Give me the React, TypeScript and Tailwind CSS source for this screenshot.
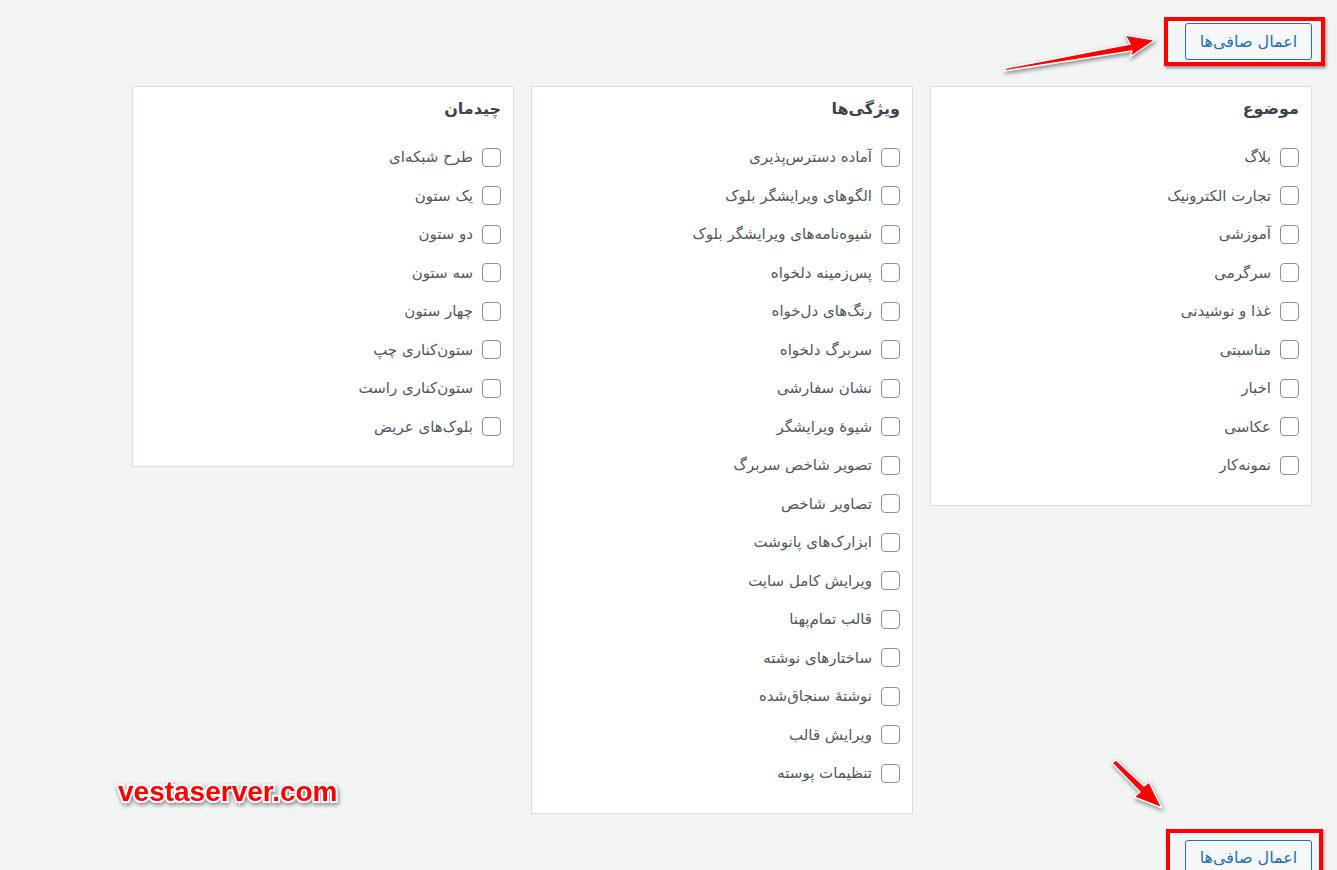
const TOPICS = [
  "بلاگ",
  "تجارت الکترونیک",
  "آموزشی",
  "سرگرمی",
  "غذا و نوشیدنی",
  "مناسبتی",
  "اخبار",
  "عکاسی",
  "نمونه‌کار",
];

const FEATURES = [
  "آماده دسترس‌پذیری",
  "الگوهای ویرایشگر بلوک",
  "شیوه‌نامه‌های ویرایشگر بلوک",
  "پس‌زمینه دلخواه",
  "رنگ‌های دل‌خواه",
  "سربرگ دلخواه",
  "نشان سفارشی",
  "شیوهٔ ویرایشگر",
  "تصویر شاخص سربرگ",
  "تصاویر شاخص",
  "ابزارک‌های پانوشت",
  "ویرایش کامل سایت",
  "قالب تمام‌پهنا",
  "ساختارهای نوشته",
  "نوشتهٔ سنجاق‌شده",
  "ویرایش قالب",
  "تنظیمات پوسته",
];

const LAYOUT = [
  "طرح شبکه‌ای",
  "یک ستون",
  "دو ستون",
  "سه ستون",
  "چهار ستون",
  "ستون‌کناری چپ",
  "ستون‌کناری راست",
  "بلوک‌های عریض",
];

function FilterGroup({ title, items }: { title: string; items: string[] }) {
  return (
    <div className="w-[382px] shrink-0 border border-[#dcdcde] bg-white pr-[12px] pl-4 pt-[10px] pb-[20px]">
      <h4 className="text-[16px] leading-[24px] font-bold text-[#3c434a]">{title}</h4>
      <div className="mt-[17px] flex flex-col">
        {items.map((item) => (
          <label key={item} className="flex h-[38.5px] items-center gap-[9px]">
            <span className="h-[19px] w-[19px] shrink-0 rounded-[4px] border border-[#8c8f94] bg-white" />
            <span className="text-[15px] text-[#50575e]">{item}</span>
          </label>
        ))}
      </div>
    </div>
  );
}

function ApplyButton({ boxClass }: { boxClass: string }) {
  return (
    <div className="relative">
      <button className="h-[37px] w-[127px] rounded-[3px] border border-[#2271b1] bg-[#f6f7f7] text-[16px] text-[#2271b1]">
        اعمال صافی‌ها
      </button>
      {/* annotation frame */}
      <div className={boxClass} />
    </div>
  );
}

export default function App() {
  return (
    <div
      dir="rtl"
      className="relative h-[870px] w-[1337px] overflow-hidden bg-[#f3f4f4] pr-[25px] pt-[23px] font-['DejaVu_Sans',sans-serif]"
    >
      <div className="flex">
        <ApplyButton boxClass="pointer-events-none absolute -top-[6px] -right-[13px] -bottom-[6px] -left-[21px] border-[4px] border-[#ff0000] shadow-[1px_2px_3px_rgba(0,0,0,0.45)]" />
      </div>

      <div className="mt-[26px] flex items-start gap-[17px]">
        <FilterGroup title="موضوع" items={TOPICS} />
        <FilterGroup title="ویژگی‌ها" items={FEATURES} />
        <FilterGroup title="چیدمان" items={LAYOUT} />
      </div>

      <div className="mt-[26px] flex">
        <ApplyButton boxClass="pointer-events-none absolute -top-[11px] -right-[11px] -bottom-[6px] -left-[19px] border-[4px] border-[#ff0000] shadow-[1px_2px_3px_rgba(0,0,0,0.45)]" />
      </div>

      {/* watermark */}
      <div
        dir="ltr"
        className="absolute left-[118px] top-[778px] font-['Liberation_Sans',Arial,sans-serif] text-[28px] leading-[28px] font-bold text-[#ff0000] [-webkit-text-stroke:4px_white] [paint-order:stroke_fill] drop-shadow-[1px_2px_2px_rgba(0,0,0,0.45)]"
      >
        vestaserver.com
      </div>

      {/* arrows */}
      <svg
        width="1337"
        height="870"
        viewBox="0 0 1337 870"
        className="pointer-events-none absolute top-0 left-0 drop-shadow-[1px_2px_2px_rgba(0,0,0,0.45)]"
      >
        <polygon
          points="1004,71 1006,68 1130,44 1125,35 1155,40 1130,57 1132,51"
          fill="#ff0000"
          stroke="#ffffff"
          strokeWidth="1.5"
          strokeLinejoin="round"
        />
        <polygon
          points="1112,763 1116,760 1144,786 1149,782 1162,808 1134,797 1140,792"
          fill="#ff0000"
          stroke="#ffffff"
          strokeWidth="1.5"
          strokeLinejoin="round"
        />
      </svg>
    </div>
  );
}
